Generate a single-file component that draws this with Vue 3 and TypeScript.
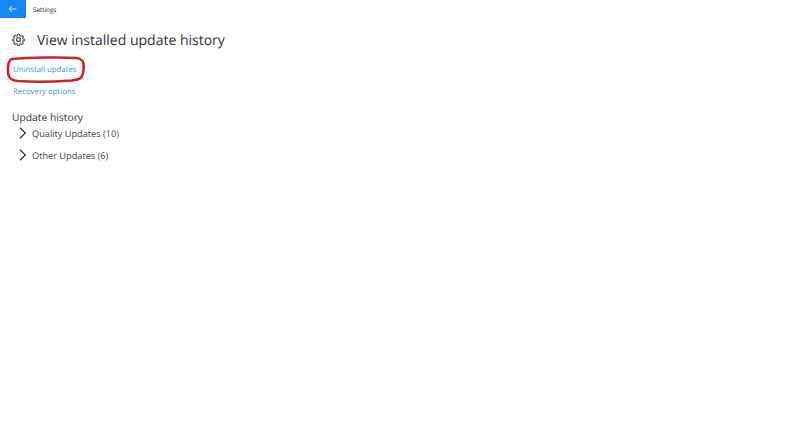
<script setup lang="ts">
const groups: string[] = ['Quality Updates (10)', 'Other Updates (6)']
</script>

<template>
  <div class="page">
    <header class="titlebar">
      <button class="back" aria-label="Back">
        <svg width="9" height="8" viewBox="0 0 9 8" fill="none" stroke="#dcecff" stroke-width="1">
          <path d="M8.5 4H1M4 1 1 4l3 3" />
        </svg>
      </button>
      <span class="app">Settings</span>
    </header>
    <main class="content">
      <div class="heading">
        <svg class="gear" width="13" height="13" viewBox="0 0 24 24" fill="none" stroke="#555" stroke-width="2.4">
          <circle cx="12" cy="12" r="3.6" />
          <path d="M10 1.8h4l.7 3.2 2.2.9 2.8-1.8 2.8 2.8-1.8 2.8.9 2.2 3 .7v2.8l-3 .7-.9 2.2 1.8 2.8-2.8 2.8-2.8-1.8-2.2.9-.7 3h-4l-.7-3-2.2-.9-2.8 1.8-2.8-2.8 1.8-2.8-.9-2.2-3-.7v-2.8l3-.7.9-2.2-1.8-2.8 2.8-2.8 2.8 1.8 2.2-.9z" transform="translate(12 12) scale(.86) translate(-12 -13)" />
        </svg>
        <h1>View installed update history</h1>
      </div>
      <a class="link first">Uninstall updates</a>
      <a class="link second">Recovery options</a>
      <h2>Update history</h2>
      <ul class="groups">
        <li v-for="g in groups" :key="g">
          <svg width="8" height="12" viewBox="0 0 8 12" fill="none" stroke="#333" stroke-width="1.2">
            <path d="M1 .8 6.4 6 1 11.2" />
          </svg>
          <span>{{ g }}</span>
        </li>
      </ul>
    </main>
    <svg class="annotation" width="80" height="28" viewBox="0 0 80 28" fill="none" stroke="#d0202f" stroke-width="2.6">
      <path d="M6 3C22 1.500 56 1 70 2c5 .5 7 2 7.500 6 .5 5 .5 9-2 13-1.500 2.500-5 3-10 3.500-14 1-40 1.500-54 .5-5-.5-8-2-9-6C1.500 15 2 8 3 6c.5-1.500 1.500-2.500 3-3Z" />
    </svg>
  </div>
</template>

<style scoped>
.page {
  position: relative;
  width: 800px;
  height: 445px;
  overflow: hidden;
  background: #fff;
  font-family: "Open Sans", "Noto Sans", sans-serif;
  color: #333;
  text-rendering: geometricPrecision;
}
.titlebar {
  display: flex;
  align-items: center;
  height: 18px;
}
.back {
  display: flex;
  align-items: center;
  justify-content: center;
  width: 26px;
  height: 18px;
  padding: 0 1px 0 0;
  border: 0;
  background: #1487f5;
}
.app {
  margin-left: 7px;
  font-size: 6.3px;
  color: #222;
}
.content {
  padding: 10px 0 0 12px;
}
.heading {
  display: flex;
  align-items: flex-start;
  height: 22px;
}
.gear {
  flex: none;
  margin-top: 4.5px;
}
h1 {
  margin: 1.5px 0 0 12px;
  font-size: 14px;
  font-weight: 400;
  line-height: 22px;
  color: #333;
}
.link {
  display: block;
  margin-left: 1px;
  font-size: 7.8px;
  line-height: 12px;
  color: #3a94e8;
}
.first {
  margin-top: 14px;
}
.second {
  margin-top: 10px;
}
h2 {
  margin: 12px 0 1px;
  font-size: 10.3px;
  font-weight: 400;
  line-height: 16px;
  color: #333;
}
.groups {
  display: flex;
  flex-direction: column;
  gap: 10px;
  margin: 0;
  padding: 0;
  list-style: none;
}
.groups li {
  display: flex;
  align-items: center;
  gap: 5px;
  height: 12px;
  padding-left: 7px;
  font-size: 9.2px;
  color: #444;
}
.annotation {
  position: absolute;
  left: 6px;
  top: 56px;
}
</style>
